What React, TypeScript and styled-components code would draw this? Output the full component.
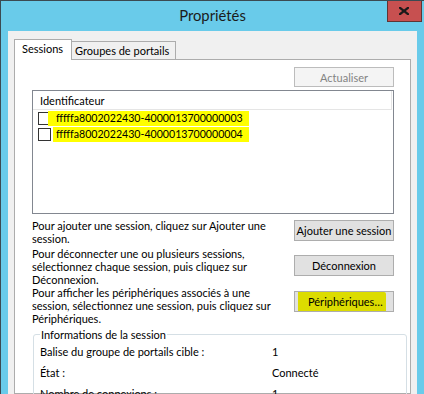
import React from "react";
import styled, { createGlobalStyle } from "styled-components";

const Global = createGlobalStyle`
  html, body { margin: 0; padding: 0; }
  body {
    background: #69cbea;
    font-family: Lato, "Liberation Sans", sans-serif;
    -webkit-font-smoothing: antialiased;
  }
`;

const Window = styled.div`
  width: 424px;
  height: 394px;
  box-sizing: border-box;
  background: #69cbea;
  border-top: 1px solid #3b4a52;
  border-left: 1px solid #3b4a52;
  overflow: hidden;
  display: flex;
  flex-direction: column;
`;

const TitleBar = styled.div`
  height: 30px;
  flex: none;
  display: grid;
  grid-template-columns: 1fr auto 1fr;
  align-items: start;
`;

const Title = styled.div`
  grid-column: 2;
  font-size: 14.8px;
  line-height: 29px;
  color: #1b1b1b;
`;

const CloseButton = styled.div`
  grid-column: 3;
  justify-self: end;
  margin-right: 2px;
  margin-top: -1px;
  width: 35px;
  height: 22px;
  box-sizing: border-box;
  background: #c75050;
  border: 1px solid #5f3434;
  border-top: none;
  display: flex;
  align-items: center;
  justify-content: center;
  padding-right: 1px;
`;

const Client = styled.div`
  flex: 1;
  min-height: 0;
  margin: 0 7px 0 7px;
  background: #f0f0f0;
  padding: 8px 6px 0 6px;
  display: flex;
  flex-direction: column;
`;

const TabStrip = styled.div`
  display: flex;
  align-items: flex-end;
  height: 21px;
  margin-bottom: -1px;
  position: relative;
  z-index: 1;
`;

const Tab = styled.div<{ $active?: boolean }>`
  box-sizing: border-box;
  height: ${(p) => (p.$active ? "21px" : "18px")};
  margin-bottom: ${(p) => (p.$active ? "0" : "1px")};
  padding: ${(p) => (p.$active ? "0 8px 3px 7px" : "0 6px 1px 3px")};
  border: 1px solid #acacac;
  border-bottom: none;
  border-left: ${(p) => (p.$active ? "1px solid #acacac" : "none")};
  background: ${(p) => (p.$active ? "#ffffff" : "#f0f0f0")};
  font-size: 11px;
  color: #000;
  display: flex;
  align-items: center;
  white-space: nowrap;
`;

const Panel = styled.div`
  flex: 1;
  min-height: 0;
  background: #ffffff;
  border: 1px solid #acacac;
  padding: 7px 16px 0 17px;
  display: flex;
  flex-direction: column;
`;

const Toolbar = styled.div`
  display: flex;
  justify-content: flex-end;
`;

const Button = styled.button<{ $tall?: boolean; $marked?: boolean }>`
  width: 100px;
  height: ${(p) => (p.$tall ? "21px" : "20px")};
  box-sizing: border-box;
  border: 1px solid #adadad;
  background: #e1e1e1;
  font-family: inherit;
  font-size: 11px;
  color: #000;
  padding: 0;
  display: flex;
  align-items: ${(p) => (p.$marked ? "flex-end" : "center")};
  justify-content: ${(p) => (p.$marked ? "flex-start" : "center")};
  &:disabled {
    background: #f4f4f4;
    border-color: #bcbcbc;
    color: #838383;
  }
`;

const Mark = styled.span`
  width: 88px;
  height: 19px;
  margin-left: 3px;
  background: #dcdc00;
  border-radius: 0 2px 0 0;
  padding-left: 10px;
  box-sizing: border-box;
  display: flex;
  align-items: center;
  white-space: nowrap;
`;

const ListBox = styled.div`
  margin-top: 3px;
  height: 124px;
  box-sizing: border-box;
  border: 1px solid #828790;
  background: #fff;
  flex: none;
`;

const ListHeader = styled.div`
  height: 19px;
  box-sizing: border-box;
  margin-right: 1px;
  border-bottom: 1px solid #e5e5e5;
  border-right: 1px solid #e5e5e5;
  padding-left: 7px;
  display: flex;
  align-items: center;
  font-size: 11px;
  color: #000;
`;

const ListRow = styled.div`
  height: 16px;
  display: flex;
  align-items: center;
  padding-left: 5px;
`;

const Check = styled.span`
  width: 13px;
  height: 13px;
  box-sizing: border-box;
  border: 1px solid #333;
  background: #fff;
  flex: none;
`;

const Highlight = styled.span<{ $lead: number }>`
  background: #ffff00;
  font-size: 10.6px;
  color: #000;
  line-height: 15px;
  margin-left: ${(p) => 5 - p.$lead}px;
  padding: 0 6px 0 ${(p) => p.$lead}px;
  white-space: nowrap;
`;

const InfoRow = styled.div<{ $gap: number }>`
  display: grid;
  grid-template-columns: 1fr 100px;
  margin-top: ${(p) => p.$gap}px;
`;

const InfoText = styled.div`
  font-size: 11px;
  line-height: 13px;
  color: #000;
  white-space: nowrap;
`;

const InfoAction = styled.div<{ $offset: number }>`
  padding-top: ${(p) => p.$offset}px;
`;

const GroupBox = styled.fieldset`
  margin: 3px -13px 0 1px;
  border: 1px solid #d5dfe5;
  border-radius: 3px;
  padding: 0 6px;
  min-width: 0;
`;

const Legend = styled.legend`
  padding: 0 1px;
  margin-left: 0;
  font-size: 11px;
  line-height: 13px;
  color: #000;
`;

const PropRow = styled.div`
  display: grid;
  grid-template-columns: 232px 1fr;
  height: 21px;
  align-items: center;
  font-size: 11px;
  color: #000;
`;

const CloseGlyph = () => (
  <svg width="10" height="8" viewBox="0 0 10 8">
    <path d="M1 0.8 L9 7.2 M9 0.8 L1 7.2" stroke="#1a1a1a" strokeWidth="2.2" strokeLinecap="square" />
  </svg>
);

export default function App() {
  return (
    <>
      <Global />
      <Window>
        <TitleBar>
          <Title>Propriétés</Title>
          <CloseButton>
            <CloseGlyph />
          </CloseButton>
        </TitleBar>
        <Client>
          <TabStrip>
            <Tab $active>Sessions</Tab>
            <Tab>Groupes de portails</Tab>
          </TabStrip>
          <Panel>
            <Toolbar>
              <Button disabled>Actualiser</Button>
            </Toolbar>
            <ListBox>
              <ListHeader>Identificateur</ListHeader>
              <ListRow>
                <Check />
                <Highlight $lead={8}>fffffa8002022430-4000013700000003</Highlight>
              </ListRow>
              <ListRow>
                <Check />
                <Highlight $lead={3}>fffffa8002022430-4000013700000004</Highlight>
              </ListRow>
            </ListBox>
            <InfoRow $gap={5}>
              <InfoText>
                Pour ajouter une session, cliquez sur Ajouter une
                <br />
                session.
              </InfoText>
              <InfoAction $offset={1}>
                <Button $tall>Ajouter une session</Button>
              </InfoAction>
            </InfoRow>
            <InfoRow $gap={2}>
              <InfoText>
                Pour déconnecter une ou plusieurs sessions,
                <br />
                sélectionnez chaque session, puis cliquez sur
                <br />
                Déconnexion.
              </InfoText>
              <InfoAction $offset={8}>
                <Button $tall>Déconnexion</Button>
              </InfoAction>
            </InfoRow>
            <InfoRow $gap={0}>
              <InfoText>
                Pour afficher les périphériques associés à une
                <br />
                session, sélectionnez une session, puis cliquez sur
                <br />
                Périphériques.
              </InfoText>
              <InfoAction $offset={5}>
                <Button $tall $marked>
                  <Mark>Périphériques…</Mark>
                </Button>
              </InfoAction>
            </InfoRow>
            <GroupBox>
              <Legend>Informations de la session</Legend>
              <PropRow>
                <span>Balise du groupe de portails cible :</span>
                <span>1</span>
              </PropRow>
              <PropRow>
                <span>État :</span>
                <span>Connecté</span>
              </PropRow>
              <PropRow>
                <span>Nombre de connexions :</span>
                <span>1</span>
              </PropRow>
            </GroupBox>
          </Panel>
        </Client>
      </Window>
    </>
  );
}
